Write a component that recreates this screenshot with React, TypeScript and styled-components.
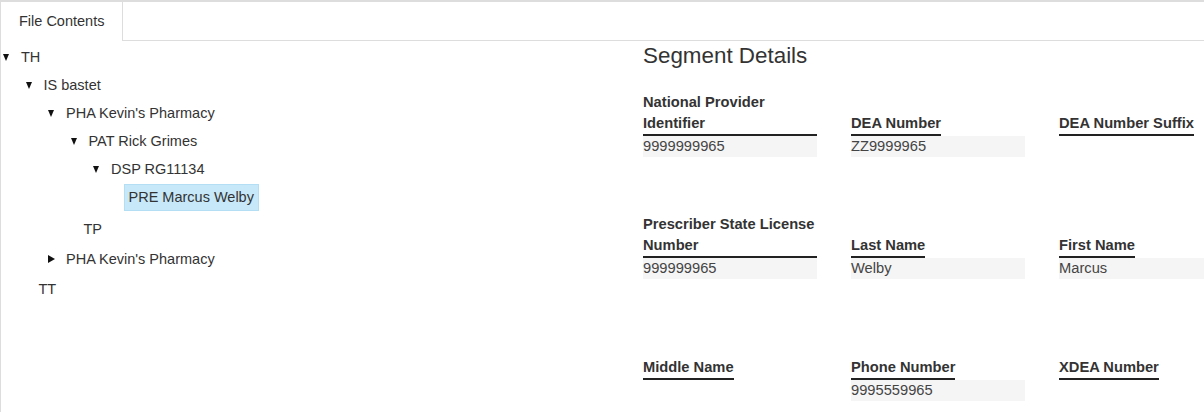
import React from "react";
import styled, { createGlobalStyle } from "styled-components";

const GlobalStyle = createGlobalStyle`
  html, body {
    margin: 0;
    padding: 0;
    background: #ffffff;
    overflow: hidden;
  }
  body {
    font-family: "Liberation Sans", Arial, sans-serif;
    font-size: 14px;
    color: #333333;
  }
`;

const Page = styled.div`
  min-height: 100vh;
  box-sizing: border-box;
  border-left: 1px solid #dddddd;
  border-top: 2px solid #dddddd;
  overflow: hidden;
`;

const TabBar = styled.div`
  display: flex;
  height: 39px;
`;

const Tab = styled.div`
  height: 39px;
  box-sizing: border-box;
  padding: 0 18px 0 18px;
  line-height: 38px;
  font-size: 14.5px;
  color: #333333;
  border-right: 1px solid #dddddd;
  background: #ffffff;
`;

const TabFiller = styled.div`
  flex: 1;
  border-bottom: 1px solid #dddddd;
`;

const Body = styled.div`
  display: grid;
  grid-template-columns: 642px 1fr;
`;

const TreePane = styled.div`
  padding-top: 2px;
`;

const Group = styled.div`
  padding-bottom: 2px;
`;

const Row = styled.div<{ $level: number }>`
  display: flex;
  align-items: center;
  height: 28px;
  padding-left: ${(p) => 2 + p.$level * 22.5}px;
`;

const Toggle = styled.span`
  display: inline-flex;
  align-items: center;
  width: 13px;
  height: 28px;
  flex: none;
`;

const Down = styled.span`
  width: 0;
  height: 0;
  border-left: 3.5px solid transparent;
  border-right: 3.5px solid transparent;
  border-top: 7px solid #111111;
`;

const Right = styled.span`
  width: 0;
  height: 0;
  border-top: 4px solid transparent;
  border-bottom: 4px solid transparent;
  border-left: 7px solid #111111;
`;

const LeafGap = styled.span`
  width: 8px;
  flex: none;
`;

const NodeLabel = styled.span<{ $selected?: boolean }>`
  display: inline-block;
  padding: 0 4px;
  height: 25px;
  line-height: 25px;
  font-size: 14.5px;
  color: #333333;
  white-space: nowrap;
  border: 1px solid ${(p) => (p.$selected ? "#b4def4" : "transparent")};
  background: ${(p) => (p.$selected ? "#c6e8f9" : "transparent")};
`;

const DetailPane = styled.div`
  padding-top: 2px;
`;

const Heading = styled.h2`
  margin: 0 0 23px 0;
  font-size: 22.4px;
  line-height: 26px;
  font-weight: normal;
  color: #333333;
`;

const FieldGrid = styled.div`
  display: grid;
  grid-template-columns: repeat(3, 174px);
  column-gap: 34px;
  row-gap: 57px;
`;

const Field = styled.div`
  display: flex;
  flex-direction: column;
`;

const LabelArea = styled.div`
  display: flex;
  align-items: flex-end;
  height: 44px;
`;

const FieldLabel = styled.span`
  font-size: 14.7px;
  line-height: 21px;
  font-weight: bold;
  color: #333333;
  border-bottom: 2px solid #222222;
`;

const FieldValue = styled.div<{ $empty: boolean }>`
  height: 21px;
  line-height: 21px;
  font-size: 14.7px;
  color: #444444;
  background: ${(p) => (p.$empty ? "transparent" : "#f5f5f5")};
  white-space: nowrap;
`;

type TreeNode = {
  label: string;
  expanded?: boolean;
  selected?: boolean;
  children?: TreeNode[];
};

const tree: TreeNode = {
  label: "TH",
  expanded: true,
  children: [
    {
      label: "IS bastet",
      expanded: true,
      children: [
        {
          label: "PHA Kevin's Pharmacy",
          expanded: true,
          children: [
            {
              label: "PAT Rick Grimes",
              expanded: true,
              children: [
                {
                  label: "DSP RG11134",
                  expanded: true,
                  children: [{ label: "PRE Marcus Welby", selected: true }],
                },
              ],
            },
            { label: "TP" },
          ],
        },
        { label: "PHA Kevin's Pharmacy", expanded: false, children: [{ label: "x" }] },
      ],
    },
    { label: "TT" },
  ],
};

function Node({ node, level }: { node: TreeNode; level: number }) {
  const hasChildren = !!node.children && node.children.length > 0;
  return (
    <>
      <Row $level={level}>
        {hasChildren ? (
          <Toggle>{node.expanded ? <Down /> : <Right />}</Toggle>
        ) : (
          <LeafGap />
        )}
        <NodeLabel $selected={node.selected}>{node.label}</NodeLabel>
      </Row>
      {hasChildren && node.expanded && (
        <Group>
          {node.children!.map((c, i) => (
            <Node key={i} node={c} level={level + 1} />
          ))}
        </Group>
      )}
    </>
  );
}

const fields: { label: string; value: string }[] = [
  { label: "National Provider Identifier", value: "9999999965" },
  { label: "DEA Number", value: "ZZ9999965" },
  { label: "DEA Number Suffix", value: "" },
  { label: "Prescriber State License Number", value: "999999965" },
  { label: "Last Name", value: "Welby" },
  { label: "First Name", value: "Marcus" },
  { label: "Middle Name", value: "" },
  { label: "Phone Number", value: "9995559965" },
  { label: "XDEA Number", value: "" },
];

export default function App() {
  return (
    <>
      <GlobalStyle />
      <Page>
        <TabBar>
          <Tab>File Contents</Tab>
          <TabFiller />
        </TabBar>
        <Body>
          <TreePane>
            <Node node={tree} level={0} />
          </TreePane>
          <DetailPane>
            <Heading>Segment Details</Heading>
            <FieldGrid>
              {fields.map((f) => (
                <Field key={f.label}>
                  <LabelArea>
                    <FieldLabel>{f.label}</FieldLabel>
                  </LabelArea>
                  <FieldValue $empty={!f.value}>{f.value}</FieldValue>
                </Field>
              ))}
            </FieldGrid>
          </DetailPane>
        </Body>
      </Page>
    </>
  );
}
